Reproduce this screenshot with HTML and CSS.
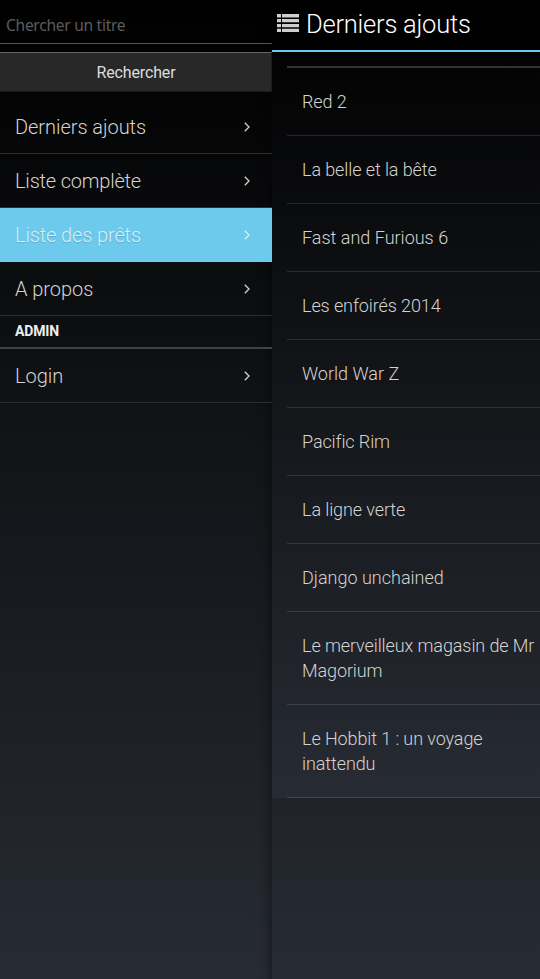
FILE: index.html
```html
<!DOCTYPE html>
<html lang="fr">
<head>
<meta charset="utf-8">
<title>Derniers ajouts</title>
<link rel="stylesheet" href="styles.css">
</head>
<body>
<div class="app">
<aside class="drawer">
<form class="search">
<input class="search-field" type="text" placeholder="Chercher un titre" aria-label="Chercher un titre">
<button class="search-button" type="button">Rechercher</button>
</form>
<nav class="menu">
<a class="menu-item">Derniers ajouts<svg class="chevron" viewBox="0 0 6 10"><path d="M.8.8 5 5 .8 9.2"/></svg></a>
<a class="menu-item tight">Liste complète<svg class="chevron" viewBox="0 0 6 10"><path d="M.8.8 5 5 .8 9.2"/></svg></a>
<a class="menu-item active">Liste des prêts<svg class="chevron" viewBox="0 0 6 10"><path d="M.8.8 5 5 .8 9.2"/></svg></a>
<a class="menu-item">A propos<svg class="chevron" viewBox="0 0 6 10"><path d="M.8.8 5 5 .8 9.2"/></svg></a>
<h2 class="divider">ADMIN</h2>
<a class="menu-item">Login<svg class="chevron" viewBox="0 0 6 10"><path d="M.8.8 5 5 .8 9.2"/></svg></a>
</nav>
</aside>
<main class="page">
<header class="bar">
<svg class="list-icon" viewBox="0 0 22 18"><path d="M0 0h4v3.5H0zM5 0h17v3.5H5zM0 5h4v3.3H0zM5 5h17v3.3H5zM0 10h4v3.3H0zM5 10h17v3.3H5zM0 14.7h4V18H0zM5 14.7h17V18H5z"/></svg>
<h1 class="title">Derniers ajouts</h1>
</header>
<ul class="films">
<li>Red 2</li><li>La belle et la bête</li><li class="plain">Fast and Furious 6</li><li>Les enfoirés 2014</li><li class="plain">World War Z</li><li>Pacific Rim</li><li>La ligne verte</li><li class="plain">Django unchained</li><li>Le merveilleux magasin de Mr Magorium</li><li>Le Hobbit 1 : un voyage inattendu</li>
</ul>
</main>
</div>
</body>
</html>
```
FILE: styles.css
```css
* { box-sizing: border-box; }
body { margin: 0; font-family: Roboto, "Liberation Sans", sans-serif; font-weight: 300; color: #d6d3cf; background: #000; }
.app { display: flex; align-items: flex-start; width: 540px; height: 979px; overflow: hidden; background: linear-gradient(#000, #272b33); }
.drawer { width: 272px; height: 979px; flex: none; box-shadow: inset -9px 0 8px -6px rgba(0,0,0,.35); }
.search { display: flex; flex-direction: column; gap: 8px; }
.search-field { width: 100%; height: 44px; padding: 6px 6px 0; border: 0; border-bottom: 1px solid #555; border-radius: 0; background: transparent; color: #ddd; font: 400 15.5px "Noto Sans", sans-serif; letter-spacing: -.25px; }
.search-field::placeholder { color: #5c5c5c; opacity: 1; }
.search-button { height: 40px; padding: 0 0 0 1px; border: 1px solid #1b1b1b; border-top-color: #666; border-left: 0; background: #282828; color: #ddd; font: 400 16px Roboto, sans-serif; letter-spacing: -.15px; }
.menu { padding-top: 8px; }
.menu-item { display: flex; align-items: center; justify-content: space-between; height: 54px; padding: 0 22px 0 15px; border-bottom: 1px solid #2b2d2f; font-size: 20px; letter-spacing: -.05px; }
.tight { letter-spacing: -.2px; }
.active { background: #6dcaec; border-color: #6dcaec; color: #d8eef5; text-shadow: 0 1px 1px rgba(0,0,0,.15); letter-spacing: -.13px; }
.chevron { width: 6px; height: 10px; fill: none; stroke: currentColor; stroke-width: 1.3; }
.divider { margin: 0; height: 33px; padding-left: 15px; border-bottom: 2px solid #414243; font-size: 14px; line-height: 30px; font-weight: 700; color: #eee; letter-spacing: -.15px; }
.page { flex: 1; min-width: 0; background: linear-gradient(#000, #272b33); }
.bar { display: flex; height: 52px; padding-left: 5px; border-bottom: 2px solid #6dcaec; background: #000; }
.list-icon { width: 22px; height: 18px; margin-top: 14px; fill: #d0cdcd; }
.title { margin: 0 0 0 7px; font-size: 25.5px; line-height: 49px; font-weight: 300; color: #fff; letter-spacing: -.23px; }
.films { list-style: none; margin: 14px 0 0 15px; padding: 0; border-top: 2px solid #333; }
.films li { padding: 21px 0 21px 15px; border-bottom: 1px solid rgba(255,255,255,.12); font-size: 18px; line-height: 25px; letter-spacing: -.1px; }
.films .plain { letter-spacing: 0; }
```
